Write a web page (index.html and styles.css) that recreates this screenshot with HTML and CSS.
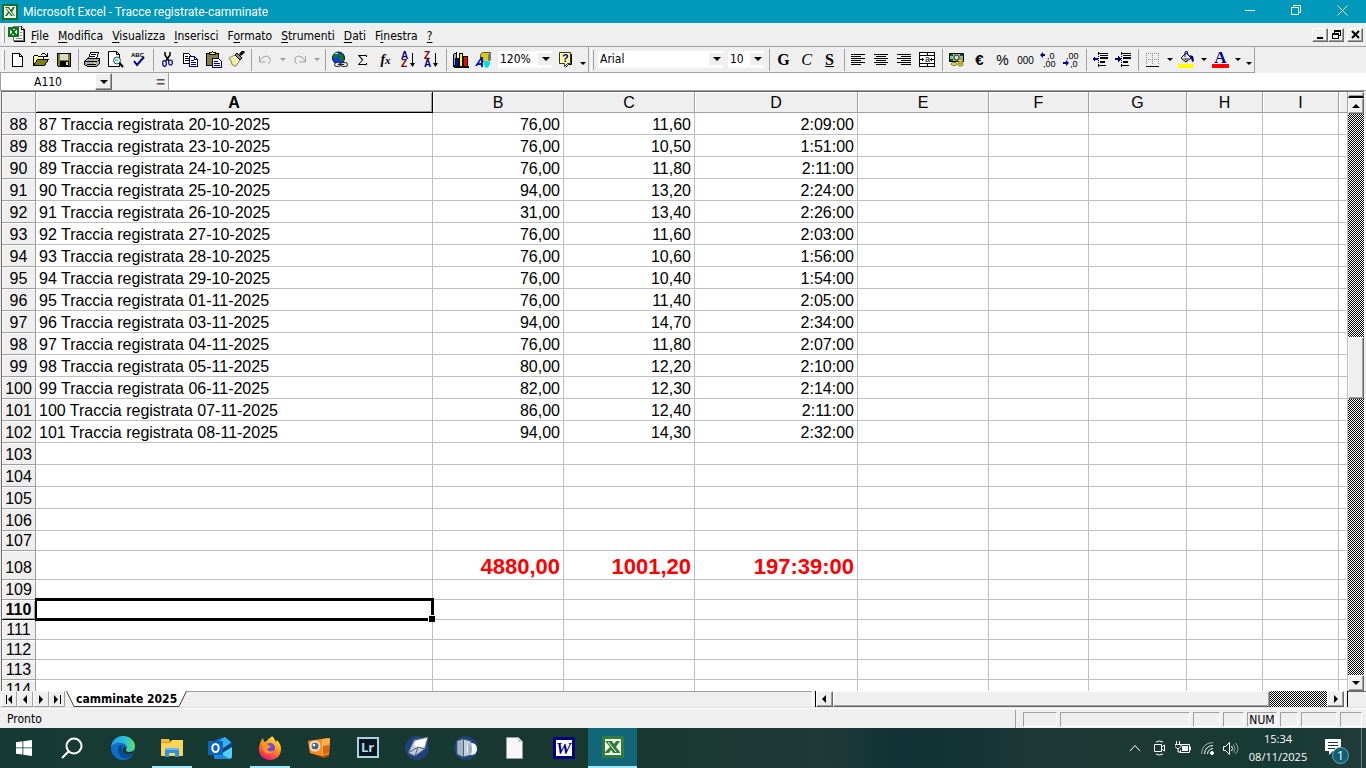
FILE: index.html
```html
<!DOCTYPE html>
<html lang="it">
<head>
  <meta charset="UTF-8" />
  <meta name="viewport" content="width=device-width, initial-scale=1.0"/>
  <title>Microsoft Excel - Tracce registrate-camminate</title>
  <link rel="stylesheet" href="styles.css">
</head>
<body>
  <header class="titlebar">
    <svg class="app-icon" width="16" height="16" viewBox="0 0 16 16"><path fill="#1c6b2c" d="M0 0h16v16H0z"/><path fill="#e9f3e6" d="M2 2h12v12H2z"/><path fill="#1c6b2c" d="M3 3h4l2 3 2-3h2l-3 5 3 4h-4L7 9l-2 3H3l3-4z"/><path fill="#fff" d="M4 4l7 8h1L6 4z"/></svg>
    <h1>Microsoft Excel - Tracce registrate-camminate</h1>
    <div class="window-buttons">
      <button aria-label="Riduci a icona"><svg width="11" height="11"><path d="M0 5.500h10" stroke="#fff"/></svg></button>
      <button aria-label="Ripristina"><svg width="11" height="11" fill="none" stroke="#fff"><path d="M.5 2.500h7v7h-7zM2.500 2.500v-2h7v7h-2"/></svg></button>
      <button aria-label="Chiudi"><svg width="11" height="11" stroke="#fff"><path d="M.5 .5l10 10M10.500 .5l-10 10"/></svg></button>
    </div>
  </header>

  <nav class="menubar">
    <span class="grip"></span>
    <svg class="doc-icon" width="17" height="17" viewBox="0 0 17 17" shape-rendering="crispEdges"><path fill="#fff" stroke="#777" d="M5.500 .5h8l2 2v12h-10z"/><path fill="#000" d="M16 3h1v13H6v-1h10zM13 0h1v3h3v1h-4z"/><path stroke="#888" d="M8 12.500h6M12 9.500h2M12 6.500h2"/><path fill="#0a7a1c" d="M0 1h11v10H0z"/><path fill="#fff" d="M2 3h7v6H2z"/><path fill="#0a7a1c" d="M2 3h3l1 2 1-2h2L7 6l2 3H6L5 7 4 9H2l2-3z"/></svg>
    <a href="#"><u>F</u>ile</a>
    <a href="#"><u>M</u>odifica</a>
    <a href="#"><u>V</u>isualizza</a>
    <a href="#"><u>I</u>nserisci</a>
    <a href="#">F<u>o</u>rmato</a>
    <a href="#"><u>S</u>trumenti</a>
    <a href="#"><u>D</u>ati</a>
    <a href="#">F<u>i</u>nestra</a>
    <a href="#"><u>?</u></a>
    <div class="doc-buttons">
      <button class="raised" aria-label="Riduci cartella"><svg width="9" height="9"><path d="M1 7h6v2H1z"/></svg></button>
      <button class="raised" aria-label="Ripristina cartella"><svg width="9" height="9" fill="none" stroke="#000" shape-rendering="crispEdges"><path d="M.5 3.500h6v5h-6zM0 4.500h6M2.500 3V.5h6v5H7M2 1.500h7"/></svg></button>
      <button class="raised close" aria-label="Chiudi cartella"><svg width="9" height="9" stroke="#000" stroke-width="2"><path d="M1 1l7 7M8 1L1 8"/></svg></button>
    </div>
  </nav>

  <div class="toolbars">
    <div class="toolbar">
      <span class="grip"></span>
      <button class="tool" aria-label="Nuovo"><svg width="17" height="17" viewBox="0 0 17 17" shape-rendering="crispEdges"><path fill="#fff" stroke="#000" d="M3.500 2.500h7l3 3v10h-10zM10.500 2.500v3h3"/></svg></button>
      <button class="tool" aria-label="Apri"><svg width="17" height="17" viewBox="0 0 17 17" shape-rendering="crispEdges"><path fill="#ffff80" stroke="#000" d="M1.500 14V5.500l1-1h3l1 1h5v3"/><path fill="#808000" stroke="#000" d="M1.500 14.500l4-6h11l-4 6z"/><path fill="none" stroke="#000" d="M9 3.500l2-1h1l3 2M15.500 2v3H12"/></svg></button>
      <button class="tool" aria-label="Salva"><svg width="17" height="17" viewBox="0 0 17 17" shape-rendering="crispEdges"><path fill="#808000" stroke="#000" d="M2.500 2.500h13v13h-12l-1-1z"/><path fill="#d8d8d8" d="M5 3h8v6H5z"/><path d="M5 10h9v5H5z"/><path fill="#ddd" d="M11 11h2v3h-2z"/></svg></button>
      <span class="sep"></span>
      <button class="tool" aria-label="Stampa"><svg width="17" height="17" viewBox="0 0 17 17" shape-rendering="crispEdges"><path fill="#fff" stroke="#000" d="M4.500 7.500l2-6h8l-2 6z"/><path fill="#aaa" stroke="#000" d="M.5 10.500l3-3h12v5l-3 3H3.500l-3-2z"/><path stroke="#000" d="M7 3.500h5M6 5.500h5M1 10.500h12M3 13.500h9M14 9.500h2"/><path fill="#ff0" d="M10 12h2v1h-2z"/></svg></button>
      <button class="tool" aria-label="Anteprima di stampa"><svg width="17" height="17" viewBox="0 0 17 17"><path fill="#fff" stroke="#000" d="M1.500 .5h8l3 3v12h-11zM9.500 .5v3h3"/><circle cx="10" cy="9.500" r="3.500" fill="#bff" stroke="#444"/><path stroke="#000" stroke-width="2" d="M12.500 12l3.500 4"/><path stroke="#777" d="M8 9h3"/></svg></button>
      <button class="tool" aria-label="Controllo ortografia"><svg width="17" height="17" viewBox="0 0 17 17"><text class="tiny" x="1" y="6">ABC</text><path fill="none" stroke="#000080" stroke-width="2" d="M4 10l3 4 7-8"/></svg></button>
      <span class="sep"></span>
      <button class="tool" aria-label="Taglia"><svg width="17" height="17" viewBox="0 0 17 17" fill="none"><path stroke="#000" stroke-width="1.500" d="M6 1v3l4 6M11 1v3l-4 6"/><g stroke="#000080" stroke-width="1.200"><ellipse cx="5.500" cy="12.500" rx="1.800" ry="2.800"/><ellipse cx="11.500" cy="11.500" rx="1.800" ry="2.500"/></g></svg></button>
      <button class="tool" aria-label="Copia"><svg width="17" height="17" viewBox="0 0 17 17" shape-rendering="crispEdges"><path fill="#fff" stroke="#000" d="M1.500 2.500h5l3 3v7h-8z"/><path stroke="#000" d="M3 5.500h3M3 7.500h5M3 9.500h5"/><path fill="#fff" stroke="#000080" d="M7.500 5.500h5l3 3v7h-8zM12.500 5.500v3h3"/><path stroke="#000080" d="M9 9.500h3M9 11.500h5M9 13.500h5"/></svg></button>
      <button class="tool" aria-label="Incolla"><svg width="17" height="17" viewBox="0 0 17 17" shape-rendering="crispEdges"><path fill="#808040" stroke="#000" d="M1.500 2.500h12v12h-12z"/><path fill="#ff0" stroke="#000" d="M4.500 3.500v-2h2l1-1 1 1h2v2z"/><path fill="#fff" stroke="#000080" d="M7.500 7.500h6l3 3v6h-9z"/><path stroke="#000080" d="M9 10.500h4M9 12.500h6M9 14.500h6"/></svg></button>
      <button class="tool" aria-label="Copia formato"><svg width="17" height="17" viewBox="0 0 17 17"><path fill="#fffac0" stroke="#777" d="M1 7l6-3 5 5-4 6H6l-2-2-1-3z"/><path stroke="#cc0" stroke-dasharray="1 1" d="M3 8l4 6M5 7l4 6M2 13l3 2"/><path fill="#888" stroke="#000" d="M7 4l2-2 5 5-2 2z"/><path stroke="#000" stroke-width="3" d="M12 4l4-4"/></svg></button>
      <span class="sep"></span>
      <button class="tool" aria-label="Annulla" disabled><svg width="17" height="17" viewBox="0 0 17 17" fill="none" stroke="#a0a0a0"><path d="M2.500 5v6h6M3 10l3-4 4-1 3 2v4l-2 2"/></svg></button>
      <button class="tool drop off" aria-label="Elenco annulla" disabled><i></i></button>
      <button class="tool" aria-label="Ripristina azione" disabled><svg width="17" height="17" viewBox="0 0 17 17" fill="none" stroke="#a0a0a0"><path d="M14.500 5v6h-6M14 10l-3-4-4-1-3 2v4l2 2"/></svg></button>
      <button class="tool drop off" aria-label="Elenco ripristina" disabled><i></i></button>
      <span class="sep"></span>
      <button class="tool" aria-label="Inserisci collegamento"><svg width="17" height="17" viewBox="0 0 17 17"><circle cx="7.500" cy="7" r="6" fill="#1438d8" stroke="#003"/><path fill="#087a20" d="M3 3l3-2 2 2-1 3-4 1-1-2zM9 2l3 2 1 5-3 1-2-3z"/><path fill="#9ff" d="M4 2h3v1H4z"/><g fill="#ddd" stroke="#222"><rect x="3.500" y="11.500" width="6" height="4" rx="2"/><rect x="9.500" y="11.500" width="7" height="4" rx="2"/></g><path stroke="#222" d="M7 13.500h6"/></svg></button>
      <button class="tool" aria-label="Somma automatica"><svg width="17" height="17" viewBox="0 0 17 17" fill="none" stroke="#000"><path d="M12.500 6V4.500H4.500L8.500 9l-4 4.500h8V12"/><path d="M5 4.500L9 9"/></svg></button>
      <button class="tool fx" aria-label="Incolla funzione">f<sub>x</sub></button>
      <button class="tool" aria-label="Ordinamento crescente"><svg width="17" height="20" viewBox="0 0 17 20"><text class="sort" x="1" y="9" fill="#000080">A</text><text class="sort" x="1" y="17" fill="#800000">Z</text><path stroke="#000" d="M12.500 3v12"/><path d="M10 13h5l-2.500 4z"/></svg></button>
      <button class="tool" aria-label="Ordinamento decrescente"><svg width="17" height="20" viewBox="0 0 17 20"><text class="sort" x="1" y="9" fill="#800000">Z</text><text class="sort" x="1" y="17" fill="#000080">A</text><path stroke="#000" d="M12.500 3v12"/><path d="M10 13h5l-2.500 4z"/></svg></button>
      <span class="sep"></span>
      <button class="tool" aria-label="Creazione grafico"><svg width="17" height="17" viewBox="0 0 17 17" shape-rendering="crispEdges"><path fill="#aaa" stroke="#000" d="M1.500 15.500v-12l3-2v12z"/><g stroke="#000"><path fill="#00f" d="M3.500 7.500h3v8h-3z"/><path fill="#ff0" d="M7.500 2.500h3v13h-3z"/><path fill="red" d="M11.500 5.500h4v10h-4z"/></g><path d="M1 15h16v2H2z"/></svg></button>
      <button class="tool" aria-label="Disegno"><svg width="17" height="17" viewBox="0 0 17 17"><path fill="#d8cc00" stroke="#555" d="M5.500 3.500l2-2h8v7l-2 2h-8z"/><path fill="#777" d="M13 4l3-3v8l-3 3z"/><path fill="#0018c8" d="M0 15l6-9h2v10H6v-2H3l-1 1z"/><path fill="#fff" d="M4 12l2-3v3z"/><path fill="#00e0e0" stroke="#fff" stroke-width=".5" d="M8 12l4-3 4 3-3 5h-3z"/></svg></button>
      <label class="combo zoom"><select aria-label="Zoom"><option>120%</option></select><i></i></label>
      <button class="tool" aria-label="Guida"><svg width="17" height="17" viewBox="0 0 17 17"><path fill="#ffffa0" stroke="#333" d="M2.500 1.500h11v11h-3l-3 3v-3h-5z"/><path fill="none" stroke="#000" d="M14.500 3v10.500h-3l-3 3"/><text class="help" x="5" y="11">?</text></svg></button>
      <button class="tool drop more" aria-label="Altri pulsanti standard"><i></i></button>
    </div>
    <div class="toolbar">
      <span class="grip"></span>
      <label class="combo font"><select aria-label="Tipo di carattere"><option>Arial</option></select><i></i></label>
      <label class="combo size"><select aria-label="Dimensione carattere"><option>10</option></select><i></i></label>
      <span class="sep"></span>
      <button class="tool letter" aria-label="Grassetto"><b>G</b></button>
      <button class="tool letter" aria-label="Corsivo"><em>C</em></button>
      <button class="tool letter" aria-label="Sottolineato"><b><u>S</u></b></button>
      <span class="sep"></span>
      <button class="tool" aria-label="Allinea a sinistra"><svg width="17" height="17" stroke="#000"><path d="M1 3.500h14M1 5.500h10M1 7.500h14M1 9.500h10M1 11.500h14M1 13.500h10"/></svg></button>
      <button class="tool" aria-label="Centra"><svg width="17" height="17" stroke="#000"><path d="M1 3.500h14M3 5.500h10M1 7.500h14M3 9.500h10M1 11.500h14M3 13.500h10"/></svg></button>
      <button class="tool" aria-label="Allinea a destra"><svg width="17" height="17" stroke="#000"><path d="M1 3.500h14M5 5.500h10M1 7.500h14M5 9.500h10M1 11.500h14M5 13.500h10"/></svg></button>
      <button class="tool" aria-label="Unisci e centra"><svg width="17" height="17" fill="none" stroke="#000" shape-rendering="crispEdges"><path fill="#fff" d="M.5 1.500h15v14H.5z"/><path d="M0 4.500h16M0 12.500h16M8.500 1v3M8.500 13v3M1 8.500h4M11 8.500h4M3.500 7v3M12.500 7v3"/><text class="tiny-a" x="6" y="11">a</text></svg></button>
      <span class="sep"></span>
      <button class="tool" aria-label="Valuta"><svg width="17" height="17" viewBox="0 0 17 17"><path fill="#8fc08f" stroke="#000" d="M1.500 2.500h14v8h-14z"/><path fill="#0a5a1c" d="M2 3h3v2H2zM12 3h3v2h-3zM2 8h3v2H2z"/><circle cx="8.500" cy="6.500" r="2.500" fill="#ddd" stroke="#222"/><g fill="#f4e040" stroke="#550" stroke-width=".7"><ellipse cx="12.500" cy="13.500" rx="2.500" ry="1.500"/><ellipse cx="12.500" cy="11.500" rx="2.500" ry="1.500"/><ellipse cx="12.500" cy="9.500" rx="2.500" ry="1.500"/><ellipse cx="6" cy="13" rx="3" ry="1.500"/></g></svg></button>
      <button class="tool euro" aria-label="Euro">€</button>
      <button class="tool percent" aria-label="Stile percentuale">%</button>
      <button class="tool zeros" aria-label="Stile separatore">000</button>
      <button class="tool" aria-label="Aumenta decimali"><svg width="17" height="17" viewBox="0 0 17 17"><path fill="#000080" d="M0 4l3-3v2h2v2H3v2z"/><text class="dec" x="7" y="8">,0</text><text class="dec" x="3" y="16">,00</text></svg></button>
      <button class="tool" aria-label="Diminuisci decimali"><svg width="17" height="17" viewBox="0 0 17 17"><text class="dec" x="3" y="8">,00</text><text class="dec" x="7" y="16">,0</text><path fill="#000080" d="M6 12l-3-3v2H0v2h3v2z"/></svg></button>
      <span class="sep"></span>
      <button class="tool" aria-label="Riduci rientro"><svg width="17" height="17" viewBox="0 0 17 17" shape-rendering="crispEdges"><path stroke="#000" d="M6 2.500h10M8 4.500h8M8 6.500h8M8 7.500h8M8 10.500h5M8 11.500h5M6 14.500h8"/><path stroke="#000" stroke-dasharray="1 1" d="M6.500 1v15"/><path fill="#000080" d="M0 8l3-3v2h3v2H3v2z"/></svg></button>
      <button class="tool" aria-label="Aumenta rientro"><svg width="17" height="17" viewBox="0 0 17 17" shape-rendering="crispEdges"><path stroke="#000" d="M6 2.500h10M8 4.500h8M8 6.500h8M8 7.500h8M8 10.500h5M8 11.500h5M6 14.500h8"/><path stroke="#000" stroke-dasharray="1 1" d="M6.500 1v15"/><path fill="#000080" d="M6 8L3 5v2H0v2h3v2z"/></svg></button>
      <span class="sep"></span>
      <button class="tool" aria-label="Bordi"><svg width="17" height="17" viewBox="0 0 17 17" shape-rendering="crispEdges"><path fill="none" stroke="#888" stroke-dasharray="1 1" d="M2.500 2v12M8.500 2v12M14.500 2v12M2 2.500h13M2 8.500h13"/><path stroke="#000" d="M2 15.500h13"/></svg></button>
      <button class="tool drop" aria-label="Elenco bordi"><i></i></button>
      <button class="tool" aria-label="Colore riempimento"><svg width="17" height="17" viewBox="0 0 17 17"><path fill="#eee" stroke="#000" d="M3 7l5-5 5 5-5 4z"/><path fill="#777" d="M5 7h7l-4 3z"/><path fill="none" stroke="#000080" d="M7 6V1l2-1 1 4"/><path fill="#000080" d="M11 4l4 1 1 5-2 1-1-4z"/><path fill="#ff0" d="M0 13h16v4H0z"/></svg></button>
      <button class="tool drop" aria-label="Elenco riempimento"><i></i></button>
      <button class="tool font-color" aria-label="Colore carattere">A</button>
      <button class="tool drop" aria-label="Elenco colori carattere"><i></i></button>
      <button class="tool drop more" aria-label="Altri pulsanti formattazione"><i></i></button>
    </div>
  </div>

  <div class="formula-bar">
    <input class="name-box" type="text" value="A110" aria-label="Casella nome">
    <button class="raised name-drop" aria-label="Elenco nomi"><i></i></button>
    <button class="equals" aria-label="Modifica formula">=</button>
    <input class="formula" type="text" aria-label="Barra della formula">
  </div>

  <main class="workbook">
    <div class="sheet">
      <table>
        <colgroup>
          <col class="c-head"><col class="c-a"><col class="c-b"><col class="c-b"><col class="c-d"><col class="c-b"><col class="c-f"><col class="c-g"><col class="c-h"><col class="c-h"><col>
        </colgroup>
        <thead>
          <tr><th></th><th class="current">A</th><th>B</th><th>C</th><th>D</th><th>E</th><th>F</th><th>G</th><th>H</th><th>I</th><th></th></tr>
        </thead>
        <tbody id="rows"></tbody>
      </table>
    </div>
    <div class="vscroll">
      <span class="split raised"></span>
      <button class="raised" aria-label="Scorri su"><i class="up"></i></button>
      <span class="track before"></span>
      <span class="thumb raised"></span>
      <span class="track after"></span>
      <button class="raised" aria-label="Scorri giù"><i class="down"></i></button>
    </div>
  </main>

  <div class="tab-strip">
    <div class="tabs">
      <button aria-label="Primo foglio"><svg width="9" height="9"><path d="M1 0h1v9H1zM7 0v9L3 4.500z"/></svg></button>
      <button aria-label="Foglio precedente"><svg width="9" height="9"><path d="M6 0v9L2 4.500z"/></svg></button>
      <button aria-label="Foglio successivo"><svg width="9" height="9"><path d="M2 0v9l4-4.500z"/></svg></button>
      <button aria-label="Ultimo foglio"><svg width="9" height="9"><path d="M1 0v9l4-4.500zM7 0h1v9H7z"/></svg></button>
      <a class="tab" href="#">
        <svg width="8" height="16"><path fill="#fff" d="M1 0h7v16z"/><path fill="none" stroke="#444" d="M.5 0L8 15.500"/></svg>
        <span>camminate 2025</span>
        <svg width="8" height="16"><path fill="#fff" d="M0 0h7L0 16z"/><path fill="none" stroke="#444" d="M7.500 0L0 15.500"/></svg>
      </a>
      <span class="tabs-rest"></span>
    </div>
    <div class="hscroll">
      <span class="hsplit"></span>
      <button class="raised" aria-label="Scorri a sinistra"><i class="left"></i></button>
      <span class="thumb raised"></span>
      <span class="track"></span>
      <button class="raised" aria-label="Scorri a destra"><i class="right"></i></button>
      <span class="hsplit end"></span>
      <span class="corner"></span>
    </div>
  </div>

  <footer class="statusbar">
    <span class="message">Pronto</span>
    <span class="pane p1"></span>
    <span class="pane p2"></span>
    <span class="pane p3"></span>
    <span class="pane p4"></span>
    <span class="pane p5">NUM</span>
    <span class="pane p6"></span>
    <span class="pane p7"></span>
    <span class="pane p8"></span>
  </footer>

  <nav class="taskbar">
    <button class="start" aria-label="Start"><svg width="16" height="16" fill="#fff"><path d="M0 2.200L6.500 1.300v6.200H0zM7.300 1.200L16 0v7.500H7.300zM0 8.300h6.500v6.300L0 13.700zM7.300 8.300H16V16l-8.700-1.200z"/></svg></button>
    <button class="search" aria-label="Cerca"><svg width="24" height="24" fill="none" stroke="#fff" stroke-width="2"><circle cx="14" cy="10" r="7.500"/><path d="M8.500 15.500L2 22"/></svg></button>
    <button aria-label="Edge"><svg width="24" height="24" viewBox="0 0 24 24"><defs><linearGradient id="edgeTop" x1="0" x2="1"><stop stop-color="#1f9de8"/><stop offset=".6" stop-color="#2cc3d8"/><stop offset="1" stop-color="#63dc5a"/></linearGradient></defs><circle cx="12" cy="12" r="12" fill="#0f6fc4"/><path fill="url(#edgeTop)" d="M0 11C1 4 6 0 12 0c7 0 12 5 12 10 0 4-3 6-6 6-4 0-5-2-3-3 2-3-1-6-5-6C5 6 1 9 0 11z"/><path fill="#0b4a92" d="M9 9c-3 3-3 10 3 13 4 1 8-1 10-4-5 2-10 0-11-4-.5-2 0-4 1-5z"/><path fill="#16383a" d="M15.500 12.500c-1.500 1.500 0 3.500 3 3.500 2 0 4-1 5.300-2.500-.3 1.700-.8 3-1.800 4.300-5 2-10 0-10.500-4 0-2 1.500-3.500 3-3 1 .4 1.300 1.200 1 1.700z"/></svg></button>
    <button class="open" aria-label="Esplora file"><svg width="22" height="20" viewBox="0 0 22 20"><path fill="#e09a10" d="M0 1h8l2 3h12v3H0z"/><path fill="#ffd45a" d="M0 5h9l2-3h11v16H0z"/><path fill="#f4bb34" d="M0 1h8v3H0z"/><path fill="#3390e0" d="M4 10h14v9h-4v-4H8v4H4z"/><path fill="#65b9f2" d="M4 10h14v2H4z"/></svg></button>
    <button aria-label="Outlook"><svg width="25" height="24" viewBox="0 0 25 24"><path fill="#1468b8" d="M5 6l9-5 10 7v5H5z"/><path fill="#31b5f2" d="M12 4l5-3 7 6-7 6h-5z"/><path fill="#123f86" d="M14 13l10-7v6l-7 6z"/><path fill="#52d0fa" d="M6 22l18-11v9q0 3-3 3H8z"/><path fill="#168cda" d="M6 14l16 9H8q-2 0-2-2z"/><path fill="#0c64be" d="M0 5h15v14H0z"/><ellipse cx="7.500" cy="12" rx="3.200" ry="4" fill="none" stroke="#fff" stroke-width="2"/></svg></button>
    <button class="open" aria-label="Firefox"><svg width="24" height="24" viewBox="0 0 24 24"><defs><linearGradient id="fox" x1=".8" y1="0" x2=".3" y2="1"><stop stop-color="#fff04a"/><stop offset=".45" stop-color="#ff9a1f"/><stop offset=".8" stop-color="#ff4050"/><stop offset="1" stop-color="#e31587"/></linearGradient></defs><path fill="url(#fox)" d="M3 5l2-3 1 4 3-1c1-3 4-3 5-5 2 2 3 4 4 6l1-2c3 3 4 6 4 9 0 7-5 11-11 11S1 20 1 13c0-3 1-6 2-8z"/><circle cx="12" cy="12" r="5" fill="#7447dc"/><path fill="#ff961f" d="M4 8c3-2 5-1 6 1l3 1c-1 2-3 2-4 3 1 3 5 3 7 1-1 5-10 5-11-1z"/></svg></button>
    <button aria-label="Visualizzatore foto"><svg width="24" height="22" viewBox="0 0 24 22"><path fill="#b94a08" d="M1 4l20-3 2 2-1 16-5 2L3 16z"/><path fill="#fb8c20" d="M1 4l14-2v17L3 16z"/><path fill="#ffb04c" d="M15 2l8-1-1 16-7 2z"/><path fill="#e26410" d="M16 9l6-1v8l-6 2z"/><circle cx="8" cy="9" r="5.500" fill="#e4e4e4"/><circle cx="8" cy="9" r="3.500" fill="#566"/><circle cx="7" cy="8" r="1.300" fill="#fff"/></svg></button>
    <button aria-label="Lightroom"><svg width="22" height="22"><path fill="#071722" stroke="#a9d3dd" stroke-width="2" d="M1 1h20v19H1z"/><text class="lr" x="4" y="15">Lr</text></svg></button>
    <button aria-label="Editor immagini"><svg width="24" height="24" viewBox="0 0 24 24"><circle cx="12" cy="12" r="12" fill="#1e427c"/><path fill="#bfcbd7" stroke="#526273" d="M9 4l14-3-3 12-10 7-7-3z"/><path fill="#fff" d="M11 5l11-3-3 9-7 1-3-3z"/><path fill="none" stroke="#526273" d="M3 17l10-6 7 2M13 11l-3 9"/></svg></button>
    <button aria-label="Fotocamera"><svg width="24" height="24" viewBox="0 0 24 24"><circle cx="12" cy="12" r="12" fill="#1e427c"/><path fill="#c3d0dd" stroke="#4d6074" d="M3 5l6-2 8 2v14l-8 2-6-3z"/><path fill="#a3b4c5" d="M4 6l5-2v16l-5-2z"/><path stroke="#4d6074" d="M9.500 3v18"/><ellipse cx="18" cy="13" rx="5" ry="6" fill="#fff"/><ellipse cx="16" cy="13" rx="2" ry="6" fill="#9cb1c4"/></svg></button>
    <button aria-label="Documento"><svg width="17" height="22"><path fill="#f7f7f7" stroke="#999" d="M.5 .5h12l4 4v17H.5z"/><path fill="#ccc" d="M12 1l4 4h-4z"/></svg></button>
    <button aria-label="Word"><svg width="22" height="22"><path fill="#000080" d="M0 0h22v22H0z"/><path fill="#fff" d="M3 3h16v16H3z"/><text class="word" x="3" y="17">W</text></svg></button>
    <button class="active" aria-label="Excel"><svg width="22" height="22" viewBox="0 0 22 22"><path fill="#2f7d38" d="M0 0h22v22H0z"/><path fill="#f4faf2" d="M3 3h16v16H3z"/><path fill="#2f7d38" d="M3 5h7l2 3 2-3h4l-4 6 4 5v1h-7l-2-3-2 3H3v-1l5-5z"/><path stroke="#fff" d="M6 6l8 10"/></svg></button>

    <div class="tray">
      <button aria-label="Icone nascoste"><svg width="12" height="8" fill="none" stroke="#fff"><path d="M1 7l5-5.500L11 7"/></svg></button>
      <button aria-label="Riunione"><svg width="13" height="16" fill="none" stroke="#fff"><path d="M1.500 4.500h7v7h-7zM8.500 7l3-2v6l-3-2M3 2q3-2 7 0M3 14q3 2 7 0"/></svg></button>
      <button aria-label="Batteria"><svg width="16" height="14" fill="none" stroke="#fff"><path d="M6 3.500h8.500v8h-9V9M14.500 6h1v3h-1M1.500 0v3M4.500 0v3M0 3.500h6v2l-2 2H2l-2-2zM3 7v4h3"/><path fill="#fff" stroke="none" d="M7 5h6v5H7z"/></svg></button>
      <button aria-label="Wi-Fi"><svg width="13" height="13" fill="none" stroke="#fff"><path stroke="#aaa" d="M.5 12Q1 1 12 .5"/><path d="M3.500 12q.5-8 8.500-8.500M6.500 12q.5-5 5.500-5.500"/><circle cx="11" cy="11" r="1.500" fill="#fff"/></svg></button>
      <button aria-label="Volume"><svg width="17" height="13" fill="none" stroke="#fff"><path d="M.5 4.500h2l4-4v12l-4-4h-2zM8.500 4q2 2.500 0 5"/><path stroke="#9aa" d="M10.500 2.500q3 4 0 8M12.500 1q5 5.500 0 11"/></svg></button>
      <button class="clock"><span>15:34</span><span>08/11/2025</span></button>
      <button class="notify" aria-label="Notifiche"><svg width="16" height="16"><path fill="#fff" d="M0 0h16v12H8l-4 4v-4H0z"/><path stroke="#1b3a37" d="M3 3.500h10M3 6.500h10M3 9.500h7"/></svg><span class="badge">1</span></button>
      <span class="show-desktop"></span>
    </div>
  </nav>

  <script src="script.js"></script>
</body>
</html>
```

FILE: styles.css
```css
* {
  box-sizing: border-box;
}

:root {
  --face: #efefef;
  --line: #a0a0a0;
  --grid: #c0c0c0;
  --ui: "DejaVu Sans Condensed", "DejaVu Sans", sans-serif;
  --win: "Open Sans", "Noto Sans", sans-serif;
}

body {
  margin: 0;
  height: 100vh;
  display: flex;
  flex-direction: column;
  overflow: hidden;
  background: var(--face);
  color: #000;
  font-family: var(--ui);
  font-size: 12px;
}

button {
  display: flex;
  align-items: center;
  justify-content: center;
  flex: none;
  padding: 0;
  border: 0;
  background: none;
  color: inherit;
  font: inherit;
}

input, select {
  min-width: 0;
  padding: 0;
  border: 0;
  border-radius: 0;
  background: #fff;
  font: inherit;
  color: inherit;
}

a {
  color: inherit;
  text-decoration: none;
}

svg {
  display: block;
  flex: none;
}

.raised {
  background: var(--face);
  border: 1px solid;
  border-color: #fff #696969 #696969 #fff;
  box-shadow: inset -1px -1px var(--line);
}

/* little triangles */
i {
  display: block;
  border: 4px solid transparent;
  border-top-color: #000;
  border-bottom: 0;
}

i.up {
  border: 4px solid transparent;
  border-bottom-color: #000;
  border-top: 0;
}

i.left {
  border: 4px solid transparent;
  border-right-color: #000;
  border-left: 0;
}

i.right {
  border: 4px solid transparent;
  border-left-color: #000;
  border-right: 0;
}

/* title bar */
.titlebar {
  flex: none;
  height: 23px;
  display: flex;
  align-items: center;
  padding-left: 2px;
  background: #0099bc;
  color: #fff;
}

.titlebar h1 {
  margin: 0 0 0 5px;
  flex: 1;
  font: 12px/20px Roboto, var(--win);
}

.window-buttons {
  display: flex;
  align-self: stretch;
}

.window-buttons button {
  width: 46px;
  padding: 0 2px 2px 0;
}

/* menu */
.menubar {
  flex: none;
  height: 24px;
  display: flex;
  align-items: center;
  gap: 9px;
  border-bottom: 1px solid var(--line);
}

.menubar a {
  padding-top: 2px;
}

.grip {
  flex: none;
  width: 3px;
  height: 20px;
  margin: 0 1px 0 2px;
  border-left: 1px solid #fff;
  border-right: 1px solid var(--line);
}

.menubar .grip {
  height: 17px;
  margin-right: 0;
}

.doc-icon {
  margin: 0 -3px 0 -6px;
}

.menubar u {
  text-underline-offset: 2px;
}

.doc-buttons {
  display: flex;
  margin-left: auto;
  padding-right: 3px;
}

.doc-buttons button {
  width: 16px;
  height: 14px;
}

.doc-buttons .close {
  margin-left: 3px;
}

/* toolbars */
.toolbars {
  flex: none;
  display: flex;
  height: 26px;
}

.toolbar {
  flex: none;
  display: flex;
  align-items: center;
  border-right: 1px solid var(--line);
  border-bottom: 1px solid var(--line);
}

.tool {
  width: 23px;
  height: 24px;
}

.drop {
  width: 11px;
}

.drop i {
  border-width: 3px;
  border-bottom: 0;
}

.drop.off i {
  border-top-color: var(--line);
}

.more {
  padding-top: 8px;
}

.sep {
  flex: none;
  width: 6px;
  height: 22px;
  background: linear-gradient(var(--line), var(--line)) 3px 0 / 1px 100% no-repeat;
}

.combo {
  display: flex;
  align-items: center;
  height: 17px;
  margin: 0 2px 1px 3px;
  padding-right: 2px;
  background: #fff;
}

.combo select {
  flex: 1;
  height: 17px;
  padding-left: 2px;
  appearance: none;
}

.combo i {
  outline: 4px solid var(--face);
  background: var(--face);
}

.combo.zoom {
  width: 54px;
}

.combo.font {
  width: 125px;
}

.combo.size {
  width: 36px;
}

.letter {
  font: 16px/20px "Liberation Serif", serif;
}

.letter u {
  text-underline-offset: 1px;
}

.fx {
  font: italic bold 14px/16px "Liberation Serif", serif;
}

.fx sub {
  font-size: 11px;
}

.euro {
  font: bold 15px/20px "Liberation Sans", sans-serif;
}

.percent {
  font: 14px/20px "Liberation Sans", sans-serif;
}

.zeros {
  font: 10px/14px "Liberation Sans", sans-serif;
  padding-top: 3px;
}

.font-color {
  width: 17px;
  height: 17px;
  margin: 0 3px;
  border-bottom: 4px solid red;
  color: #000080;
  font: bold 17px/13px "Liberation Serif", serif;
}

.tiny {
  font: bold 6px "Liberation Sans", sans-serif;
}

.tiny-a {
  font: 9px "Liberation Sans", sans-serif;
  fill: #000;
  stroke: none;
}

.sort {
  font: bold 10px "Liberation Sans", sans-serif;
}

.help {
  font: bold 11px "Liberation Sans", sans-serif;
  fill: #000080;
}

.dec {
  font: 9px "Liberation Sans", sans-serif;
}

/* formula bar */
.formula-bar {
  flex: none;
  display: flex;
  height: 17px;
}

.name-box {
  width: 95px;
  border-left: 1px solid var(--line);
  text-align: center;
}

.name-drop {
  width: 17px;
}

.equals {
  width: 56px;
  justify-content: flex-end;
  padding-right: 3px;
  color: #555;
  font: bold 15px/16px "Liberation Sans", sans-serif;
}

.formula {
  flex: 1;
  border-left: 1px solid var(--line);
}

/* sheet */
.workbook {
  flex: 1;
  min-height: 0;
  display: flex;
  padding: 0 2px 0 1px;
  border-top: 1px solid var(--line);
}

.sheet {
  flex: 1;
  min-width: 0;
  overflow: hidden;
  border-top: 1px solid #696969;
  border-left: 1px solid #696969;
  background: #fff;
}

table {
  width: 100%;
  table-layout: fixed;
  border-collapse: separate;
  border-spacing: 0;
  font: 16px/18px "Liberation Sans", Arial, sans-serif;
}

.c-head { width: 34px; }
.c-a { width: 397px; }
.c-b { width: 131px; }
.c-d { width: 163px; }
.c-f { width: 100px; }
.c-g { width: 98px; }
.c-h { width: 76px; }

th, td {
  height: 22px;
  padding: 0 3px;
  border-right: 1px solid var(--grid);
  border-bottom: 1px solid var(--grid);
  white-space: nowrap;
  vertical-align: bottom;
}

th {
  padding: 0;
  background: var(--face);
  border-color: var(--line);
  box-shadow: inset 1px 1px #fff;
  font-weight: normal;
}

thead th {
  height: 21px;
}

th.current {
  border-color: #000;
  box-shadow: inset 1px 1px #fff, inset -1px -1px var(--line);
  font-weight: bold;
}

td {
  text-align: right;
}

td:nth-child(2) {
  text-align: left;
}

.short th, .short td {
  height: 20px;
}

.total th, .total td {
  height: 29px;
}

.total th {
  line-height: 22px;
}

.total td {
  color: #f00;
  font-size: 22px;
  font-weight: bold;
  line-height: 25px;
}

td.selected {
  position: relative;
}

/* selection frame and its fill handle */
td.selected::before {
  content: "";
  position: absolute;
  inset: -2px -2px -2px -1px;
  border: 2px solid #000;
  border-width: 3px 3px 3px 2px;
}

td.selected::after {
  content: "";
  position: absolute;
  right: -3px;
  bottom: -3px;
  width: 6px;
  height: 6px;
  background: #000;
  border: 1px solid #fff;
  border-width: 1px 0 0 1px;
}

/* scroll bars */
.vscroll {
  flex: none;
  width: 16px;
  display: flex;
  flex-direction: column;
  border-top: 1px solid #696969;
}

.vscroll .split {
  height: 6px;
  border-bottom: 2px solid #000;
}

.vscroll button {
  height: 16px;
}

.track {
  background: conic-gradient(#000 25%, #fff 0 50%, #000 0 75%, #fff 0) 0 0 / 2px 2px;
}

.vscroll .before {
  flex: 224;
}

.vscroll .thumb {
  flex: 61;
}

.vscroll .after {
  flex: 277;
}

.tab-strip {
  flex: none;
  display: flex;
  height: 16px;
  padding-left: 1px;
}

.tabs {
  flex: 810;
  display: flex;
}

.tabs button {
  width: 16px;
  border: 1px solid;
  border-color: #fff var(--line) var(--line) #fff;
}

.tab {
  display: flex;
  margin-left: 1px;
  font-weight: bold;
  line-height: 17px;
}

.tab span {
  padding: 0 2px;
  background: #fff;
  border-bottom: 1px solid #444;
}

.tabs-rest {
  flex: 1;
  border-top: 1px solid var(--line);
}

.hscroll {
  flex: 554;
  display: flex;
}

.hsplit {
  flex: none;
  width: 4px;
  border-left: 1px solid #fff;
  border-right: 1px solid #000;
}

.hscroll button {
  width: 17px;
}

.hscroll .thumb {
  flex: 437;
}

.hscroll .track {
  flex: 57;
}

.corner {
  flex: none;
  width: 18px;
  border-top: 1px solid #696969;
}

/* status bar */
.statusbar {
  flex: none;
  display: flex;
  align-items: center;
  gap: 3px;
  height: 21px;
  padding: 2px 4px 0 7px;
  border-top: 1px solid #e0e0e0;
  box-shadow: inset 0 1px #fff;
}

.message {
  flex: 1;
  align-self: stretch;
  margin-right: 4px;
  border-right: 1px solid var(--line);
  line-height: 19px;
}

.pane {
  flex: none;
  height: 15px;
  border: 1px solid;
  border-color: var(--line) #fff #fff var(--line);
  text-align: center;
  line-height: 14px;
}

.p1 { width: 34px; }
.p2 { width: 130px; }
.p3 { width: 27px; }
.p4 { width: 21px; }
.p5 { width: 30px; }
.p6 { width: 18px; }
.p7 { width: 36px; }
.p8 { width: 22px; }

/* taskbar */
.taskbar {
  flex: none;
  display: flex;
  height: 40px;
  background: linear-gradient(90deg, #163a33, #18372f 45%, #1e3a37 60%, #113134 66%, #1b3736 76%, #1c3a31 84%, #163a33 92%, #203c3a);
  color: #fff;
}

.taskbar > button {
  width: 49px;
}

.taskbar > .start {
  width: 48px;
}

.taskbar > .search {
  width: 48px;
  margin-right: 2px;
}

.taskbar > .open {
  background: linear-gradient(#a0e8f8, #a0e8f8) 50% 100% / 40px 2px no-repeat;
}

.taskbar > .active {
  border-bottom: 2px solid #a0e8f8;
  background: #11667a;
}

.lr {
  font: bold 13px var(--win);
  fill: #b8dfe8;
}

.word {
  font: italic bold 17px "Liberation Serif", serif;
  fill: #000080;
}

.tray {
  display: flex;
  margin-left: auto;
  font: 11px/18px var(--win);
}

.tray button {
  width: 24px;
}

.tray .clock {
  width: 70px;
  flex-direction: column;
}

.tray .notify {
  position: relative;
  width: 48px;
  padding: 0 8px 2px 0;
}

.badge {
  position: absolute;
  left: 19px;
  top: 19px;
  width: 17px;
  height: 17px;
  border: 1px solid #6fa9b4;
  border-radius: 50%;
  background: #0f6075;
  font-size: 12px;
  line-height: 15px;
}

.show-desktop {
  width: 5px;
  border-left: 1px solid #6c7f7c;
}
```

FILE: script.js
```js
const tracks = [
  ['20-10-2025', '76,00', '11,60', '2:09:00'],
  ['23-10-2025', '76,00', '10,50', '1:51:00'],
  ['24-10-2025', '76,00', '11,80', '2:11:00'],
  ['25-10-2025', '94,00', '13,20', '2:24:00'],
  ['26-10-2025', '31,00', '13,40', '2:26:00'],
  ['27-10-2025', '76,00', '11,60', '2:03:00'],
  ['28-10-2025', '76,00', '10,60', '1:56:00'],
  ['29-10-2025', '76,00', '10,40', '1:54:00'],
  ['01-11-2025', '76,00', '11,40', '2:05:00'],
  ['03-11-2025', '94,00', '14,70', '2:34:00'],
  ['04-11-2025', '76,00', '11,80', '2:07:00'],
  ['05-11-2025', '80,00', '12,20', '2:10:00'],
  ['06-11-2025', '82,00', '12,30', '2:14:00'],
  ['07-11-2025', '86,00', '12,40', '2:11:00'],
  ['08-11-2025', '94,00', '14,30', '2:32:00']
];
const firstRow = 88;
const lastRow = 114;
const totalRow = 108;
const currentRow = 110;
const columns = 10;

const tbody = document.getElementById('rows');

for (let n = firstRow; n <= lastRow; n++) {
  const tr = document.createElement('tr');
  const track = tracks[n - firstRow];
  let cells = [];

  if (track) {
    cells = [`${n - 1} Traccia registrata ${track[0]}`, track[1], track[2], track[3]];
  } else if (n === totalRow) {
    cells = ['', '4880,00', '1001,20', '197:39:00'];
    tr.className = 'total';
  } else if (n > 106) {
    tr.className = 'short';
  }

  let html = `<th class="${n === currentRow ? 'current' : ''}">${n}</th>`;
  for (let c = 0; c < columns; c++) {
    const selected = n === currentRow && c === 0;
    html += `<td${selected ? ' class="selected"' : ''}>${cells[c] || ''}</td>`;
  }
  tr.innerHTML = html;
  tbody.appendChild(tr);
}
```
